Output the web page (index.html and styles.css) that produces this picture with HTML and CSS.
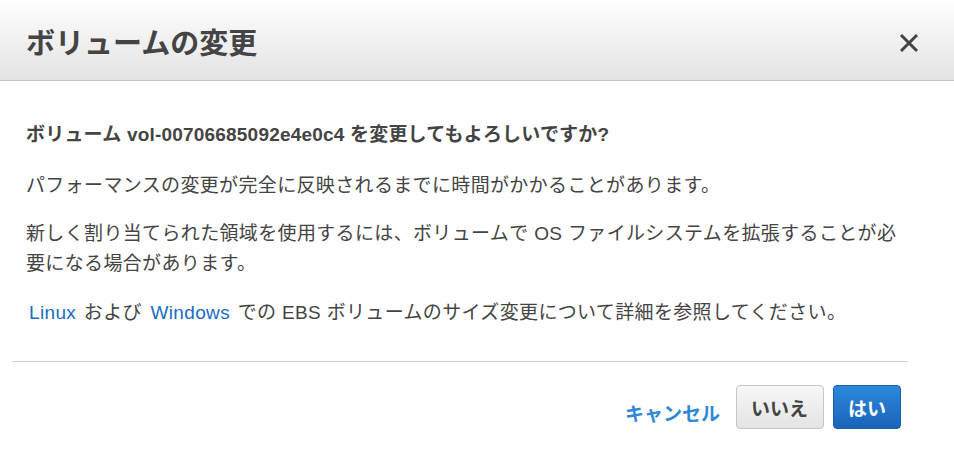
FILE: index.html
```html
<!DOCTYPE html>
<html lang="ja">
<head>
<meta charset="utf-8">
<title>ボリュームの変更</title>
<link rel="stylesheet" href="styles.css">
</head>
<body>
<div class="modal">
  <header class="modal-header">
    <h1 class="modal-title">ボリュームの変更</h1>
    <button class="close" aria-label="閉じる">
      <svg width="20" height="20" viewBox="0 0 20 20"><path d="M2 2 L18 18 M18 2 L2 18" stroke="#444" stroke-width="3" fill="none"/></svg>
    </button>
  </header>
  <main class="modal-body">
    <div class="content">
      <p class="question">ボリューム vol-00706685092e4e0c4 を変更してもよろしいですか?</p>
      <p>パフォーマンスの変更が完全に反映されるまでに時間がかかることがあります。</p>
      <p class="wrap">新しく割り当てられた領域を使用するには、ボリュームで OS ファイルシステムを拡張することが必要になる場合があります。</p>
      <p class="links"><a href="#" class="link">Linux</a> および <a href="#" class="link">Windows</a> での EBS ボリュームのサイズ変更について詳細を参照してください。</p>
    </div>
    <div class="divider"></div>
    <footer class="modal-footer">
      <a href="#" class="cancel">キャンセル</a>
      <button class="btn">いいえ</button>
      <button class="btn btn-primary">はい</button>
    </footer>
  </main>
</div>
</body>
</html>
```

FILE: styles.css
```css
* { box-sizing: border-box; }
html, body { margin: 0; padding: 0; background: #fff; }
body {
  width: 954px;
  height: 454px;
  overflow: hidden;
  font-family: "Liberation Sans", "Noto Sans CJK JP", sans-serif;
  color: #444;
}
.modal { width: 954px; }
.modal-header {
  height: 81px;
  display: flex;
  align-items: center;
  justify-content: space-between;
  padding: 0 35px 0 26px;
  background: linear-gradient(to bottom, #fefefe 0%, #e3e3e3 100%);
  border-bottom: 1px solid #c4c4c4;
}
.modal-title {
  margin: 0;
  font-family: "Noto Sans CJK JP", sans-serif;
  font-size: 29px;
  font-weight: 700;
  color: #444;
  line-height: 1;
  padding-top: 2px;
}
.close {
  border: 0;
  background: none;
  padding: 0;
  width: 20px;
  height: 20px;
  display: flex;
  align-items: center;
  justify-content: center;
  margin-top: 6px;
}
.modal-body { padding: 38px 46px 0 12px; }
.content { padding-left: 14px; }
.content p {
  margin: 0 0 18px;
  font-size: 19px;
  line-height: 31px;
  letter-spacing: 0.35px;
  color: #444;
}
.content p.question { font-weight: 700; margin-bottom: 20px; letter-spacing: 0.2px; }
.content p.wrap { line-height: 30px; margin-bottom: 18px; }
.content p.links { margin-bottom: 0; }
.link { color: #1a6cc4; text-decoration: none; padding: 0 2px 0 3px; }
.divider { margin-top: 33px; height: 1px; background: #cfcfcf; }
.modal-footer {
  display: flex;
  justify-content: flex-end;
  align-items: center;
  gap: 9px;
  padding: 23px 7px 0 0;
}
.cancel {
  color: #2f87d8;
  font-weight: 700;
  font-size: 19px;
  text-decoration: none;
  margin-right: 7px;
  margin-top: 10px;
}
.btn {
  height: 44px;
  padding: 0 15px 0 14px;
  font-family: "Liberation Sans", "Noto Sans CJK JP", sans-serif;
  font-size: 19px;
  font-weight: 700;
  color: #444;
  border: 1px solid #c6c6c6;
  border-radius: 4px;
  background: linear-gradient(to bottom, #f7f7f7 0%, #e4e4e4 100%);
}
.btn-primary {
  color: #fff;
  border-color: #1b5fa8;
  background: linear-gradient(to bottom, #2d88dc 0%, #1964b9 100%);
  padding: 0 14px;
}
```
